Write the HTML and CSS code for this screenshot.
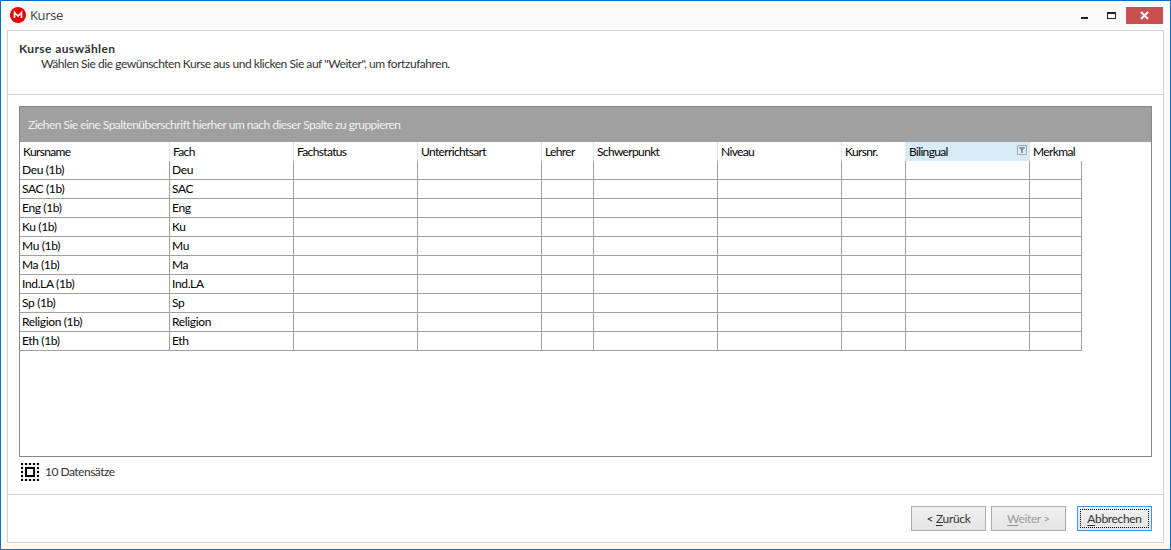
FILE: index.html
```
<!DOCTYPE html>
<html lang="de">
<head>
<meta charset="utf-8">
<title>Kurse</title>
<link rel="stylesheet" href="styles.css">
</head>
<body>
<div class="window">
  <header class="titlebar">
    <svg class="logo" width="16" height="16" viewBox="0 0 16 16"><circle cx="8" cy="8" r="8" fill="#e60000"/><path d="M4.500 11V5.500L8 9l3.500-3.500V11" fill="none" stroke="#fff" stroke-width="1.700"/></svg>
    <span class="title">Kurse</span>
    <svg class="minmax" width="36" height="17" viewBox="0 0 36 17"><path d="M0 10h7v2H0z" fill="#222"/><path d="M26 5h9v7h-9zM27 7v4h7V7z" fill="#222" fill-rule="evenodd"/></svg>
    <button class="close" aria-label="Schließen"><svg width="37" height="17" viewBox="0 0 37 17"><path d="M15 5l7 7M22 5l-7 7" stroke="#fff" stroke-width="2"/></svg></button>
  </header>
  <main class="panel">
    <section class="intro">
      <h1>Kurse auswählen</h1>
      <p>Wählen Sie die gewünschten Kurse aus und klicken Sie auf "Weiter", um fortzufahren.</p>
    </section>
    <section class="content">
      <div class="grid">
        <div class="groupbar"><span>Ziehen Sie eine Spaltenüberschrift hierher um nach dieser Spalte zu gruppieren</span></div>
        <table>
          <colgroup><col class="c150"><col class="c124"><col class="c124"><col class="c124"><col class="c52"><col class="c124"><col class="c124"><col class="c64"><col class="c124"><col class="c52"></colgroup>
          <thead><tr><th>Kursname</th><th>Fach</th><th>Fachstatus</th><th>Unterrichtsart</th><th>Lehrer</th><th>Schwerpunkt</th><th>Niveau</th><th>Kursnr.</th><th class="hot"><div class="hothead">Bilingual<svg width="10" height="10" viewBox="0 0 10 10"><path d="M.5.500h9v9h-9z" fill="#e0edf8" stroke="#9ba9b8"/><path d="M2 2h6v1L6 5v3H4V5L2 3z" fill="#8997a5"/></svg></div></th><th>Merkmal</th></tr></thead>
          <tbody>
            <tr><td>Deu (1b)</td><td>Deu</td><td></td><td></td><td></td><td></td><td></td><td></td><td></td><td></td></tr>
            <tr><td>SAC (1b)</td><td>SAC</td><td></td><td></td><td></td><td></td><td></td><td></td><td></td><td></td></tr>
            <tr><td>Eng (1b)</td><td>Eng</td><td></td><td></td><td></td><td></td><td></td><td></td><td></td><td></td></tr>
            <tr><td>Ku (1b)</td><td>Ku</td><td></td><td></td><td></td><td></td><td></td><td></td><td></td><td></td></tr>
            <tr><td>Mu (1b)</td><td>Mu</td><td></td><td></td><td></td><td></td><td></td><td></td><td></td><td></td></tr>
            <tr><td>Ma (1b)</td><td>Ma</td><td></td><td></td><td></td><td></td><td></td><td></td><td></td><td></td></tr>
            <tr><td>Ind.LA (1b)</td><td>Ind.LA</td><td></td><td></td><td></td><td></td><td></td><td></td><td></td><td></td></tr>
            <tr><td>Sp (1b)</td><td>Sp</td><td></td><td></td><td></td><td></td><td></td><td></td><td></td><td></td></tr>
            <tr><td>Religion (1b)</td><td>Religion</td><td></td><td></td><td></td><td></td><td></td><td></td><td></td><td></td></tr>
            <tr><td>Eth (1b)</td><td>Eth</td><td></td><td></td><td></td><td></td><td></td><td></td><td></td><td></td></tr>
          </tbody>
        </table>
      </div>
      <div class="status">
        <svg width="18" height="18" viewBox="0 0 18 18"><path d="M0 0h18v18H0z" fill="#e0e0e0"/><path d="M2 2h14v14H2z" fill="#f4f4f4"/><path d="M0 1h18M0 17h18M1 0v18M17 0v18" fill="none" stroke="#000" stroke-width="2" stroke-dasharray="2 2"/><path d="M5 5h8v8H5z" fill="#fff" stroke="#000" stroke-width="2"/></svg>
        <span>10 Datensätze</span>
      </div>
    </section>
    <footer class="actions">
      <button class="btn">&lt; <u>Z</u>urück</button>
      <button class="btn disabled" disabled><u>W</u>eiter &gt;</button>
      <button class="btn focused"><span><u>A</u>bbrechen</span></button>
    </footer>
  </main>
</div>
</body>
</html>
```
FILE: styles.css
```
* { box-sizing: border-box; }
body { margin: 0; font: 12px/14px Lato, sans-serif; letter-spacing: -.35px; color: #333; }
button { font: inherit; letter-spacing: inherit; color: inherit; margin: 0; padding: 0; }
svg { display: block; }
.window { width: 1171px; height: 550px; border: 1px solid #0071c5; background: #fbfbfb; padding: 0 6px 6px; display: flex; flex-direction: column; }
.titlebar { height: 29px; flex: none; display: flex; align-items: flex-start; padding: 6px 1px 0 3px; }
.title { font: 13px/16px "Open Sans", sans-serif; letter-spacing: -.35px; margin: 0 auto 0 4px; color: #444; }
.minmax { margin-right: 9px; }
.close { width: 37px; height: 17px; border: 0; background: #c75050; }
.panel { flex: 1; border: 1px solid #d3d3d3; background: #fff; display: flex; flex-direction: column; }
.intro { height: 64px; border-bottom: 1px solid #d3d3d3; padding: 10px 11px; }
h1 { font-size: 12px; line-height: 15px; letter-spacing: .4px; margin: 0; }
p { margin: 0 0 0 22px; line-height: 15px; letter-spacing: -.46px; }
.content { height: 400px; border-bottom: 1px solid #d3d3d3; padding: 11px 11px 0; }
.grid { height: 351px; border: 1px solid #828790; }
.groupbar { height: 35px; padding: 11px 8px; background: #a0a0a0; color: #f0f0f0; letter-spacing: -.53px; }
table { table-layout: fixed; width: 1062px; border-collapse: separate; border-spacing: 0; color: #000; }
.c150 { width: 150px; } .c124 { width: 124px; } .c52 { width: 52px; } .c64 { width: 64px; }
th { height: 19px; padding: 0 0 0 3px; text-align: left; font-weight: 400; letter-spacing: -.65px; border-right: 1px solid #e5e5e5; white-space: nowrap; }
th:last-child { border-right: 0; }
th:nth-child(8), .hot { border-color: #d9ebf9; }
.hot { background: #d9ebf9; }
.hothead { display: flex; justify-content: space-between; padding-right: 2px; }
td { height: 19px; padding: 0 0 0 2px; border-right: 1px solid #a0a0a0; border-bottom: 1px solid #a0a0a0; }
.status { display: flex; align-items: center; gap: 6px; padding: 6px 0 0 2px; letter-spacing: -.5px; }
.actions { flex: 1; display: flex; justify-content: flex-end; padding: 11px 11px 0; }
.btn { width: 75px; height: 25px; border: 1px solid #acacac; background: linear-gradient(#f0f0f0, #e5e5e5); margin-right: 5px; }
.disabled { color: #999; }
.focused { margin: 0 0 0 6px; border-color: #3399ff; padding: 2px; }
.focused span { display: flex; align-items: center; justify-content: center; height: 19px; border: 1px dotted #000; }
u { text-underline-offset: 2px; }
```
